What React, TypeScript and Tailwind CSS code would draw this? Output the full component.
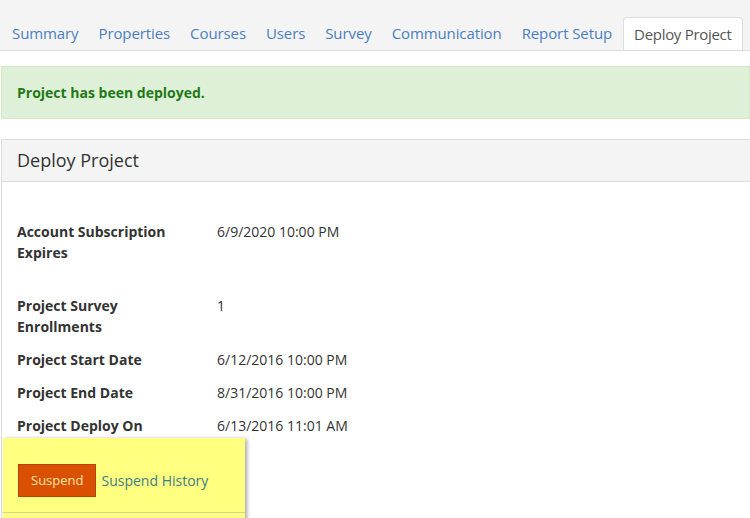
import React from "react";

const tabs = ["Summary", "Properties", "Courses", "Users", "Survey", "Communication", "Report Setup"];

function Row({ label, value, className }: { label: string; value: string; className?: string }) {
  return (
    <div className={"flex text-[14px] leading-[21px] text-[#333] " + (className ?? "")}>
      <div className="w-[200px] shrink-0 pr-[20px] font-bold">{label}</div>
      <div>{value}</div>
    </div>
  );
}

export default function App() {
  return (
    <div
      className="w-[750px] h-[518px] overflow-hidden bg-white"
      style={{ fontFamily: '"Open Sans", "Noto Sans", sans-serif' }}
    >
      {/* Tabs */}
      <div className="h-[51px] bg-[#f4f4f4] border-b border-[#dddddd] flex items-end pl-[2px] overflow-hidden">
        {tabs.map((t) => (
          <div key={t} className="shrink-0 whitespace-nowrap px-[10px] h-[33px] flex items-center text-[15px] tracking-[-0.1px] text-[#4a7fc1] leading-none">
            {t}
          </div>
        ))}
        <div className="shrink-0 whitespace-nowrap ml-[1px] -mb-px h-[34px] px-[10px] flex items-center bg-white border border-b-0 border-[#dddddd] rounded-t-[4px] text-[15px] tracking-[-0.3px] text-[#555] leading-none">
          Deploy Project
        </div>
      </div>

      {/* Alert */}
      <div className="mt-[15px] ml-[1px] h-[53px] bg-[#dff0d8] border border-[#d6e9c6] flex items-center px-[15px] text-[14px] font-bold text-[#1e7a14]">
        Project has been deployed.
      </div>

      {/* Panel */}
      <div className="mt-[20px] ml-[1px] border border-[#dddddd] border-r-0">
        <div className="h-[42px] bg-[#f4f4f4] border-b border-[#dddddd] flex items-center px-[15px] text-[18px] text-[#333]">
          Deploy Project
        </div>
        <div className="pt-[39px] pl-[15px]">
          <Row label="Account Subscription Expires" value="6/9/2020 10:00 PM" className="mb-[32px]" />
          <Row label="Project Survey Enrollments" value="1" className="mb-[12px]" />
          <Row label="Project Start Date" value="6/12/2016 10:00 PM" className="mb-[12px]" />
          <Row label="Project End Date" value="8/31/2016 10:00 PM" className="mb-[12px]" />
          <Row label="Project Deploy On" value="6/13/2016 11:01 AM" />
        </div>
        <div className="mt-[2px] ml-px w-[242px] h-[100px] bg-[#ffff80] shadow-[2px_1px_4px_rgba(0,0,0,0.35)] pt-[26px] pl-[15px] relative">
          <div className="flex items-center">
            <button className="h-[33px] px-[12px] bg-[#d95000] border border-[#b84300] text-[#ffe6a8] text-[13px]">
              Suspend
            </button>
            <span className="ml-[5px] text-[14px] text-[#3d7e8a]">Suspend History</span>
          </div>
          <div className="absolute left-0 right-0 top-[74px] h-px bg-[#d4d49a]" />
        </div>
      </div>
    </div>
  );
}
